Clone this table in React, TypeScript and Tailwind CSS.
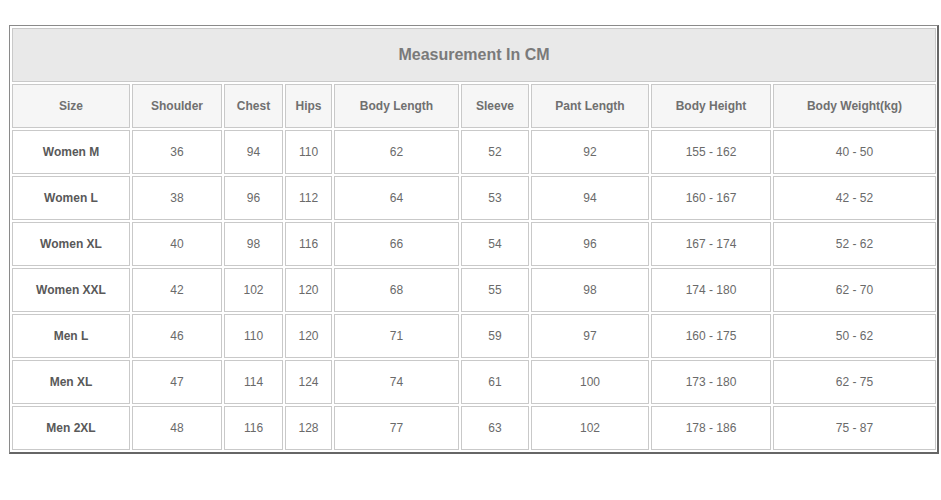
const columns = [
  "Size",
  "Shoulder",
  "Chest",
  "Hips",
  "Body Length",
  "Sleeve",
  "Pant Length",
  "Body Height",
  "Body Weight(kg)",
];

const rows = [
  ["Women M", "36", "94", "110", "62", "52", "92", "155 - 162", "40 - 50"],
  ["Women L", "38", "96", "112", "64", "53", "94", "160 - 167", "42 - 52"],
  ["Women XL", "40", "98", "116", "66", "54", "96", "167 - 174", "52 - 62"],
  ["Women XXL", "42", "102", "120", "68", "55", "98", "174 - 180", "62 - 70"],
  ["Men L", "46", "110", "120", "71", "59", "97", "160 - 175", "50 - 62"],
  ["Men XL", "47", "114", "124", "74", "61", "100", "173 - 180", "62 - 75"],
  ["Men 2XL", "48", "116", "128", "77", "63", "102", "178 - 186", "75 - 87"],
];

export default function App() {
  return (
    <div className="w-[941px] h-[500px] bg-white pt-[25px] pl-[9px] font-['Liberation_Sans',Arial,sans-serif]">
      <div className="w-[930px] border border-[#8a8a8a] border-r-2 border-b-2 border-r-[#666] border-b-[#666] p-[2px]">
        <div className="grid grid-cols-[118px_90px_59px_47px_125px_68px_118px_120px_163px] grid-rows-[54px_repeat(8,44px)] gap-[2px]">
          {/* title */}
          <div className="col-span-9 flex items-center justify-center bg-[#e9e9e9] border border-[#c9c9c9] text-[16px] font-bold text-[#7a7a7a]">
            Measurement In CM
          </div>

          {/* column headers */}
          {columns.map((c) => (
            <div
              key={c}
              className="flex items-center justify-center bg-[#f6f6f6] border border-[#c9c9c9] text-[12px] font-bold text-[#707070]"
            >
              {c}
            </div>
          ))}

          {/* body */}
          {rows.map((r) =>
            r.map((v, i) => (
              <div
                key={r[0] + i}
                className={
                  "flex items-center justify-center bg-white border border-[#c9c9c9] text-[12px] " +
                  (i === 0 ? "font-bold text-[#595959]" : "text-[#6a6a6a]")
                }
              >
                {v}
              </div>
            ))
          )}
        </div>
      </div>
    </div>
  );
}
